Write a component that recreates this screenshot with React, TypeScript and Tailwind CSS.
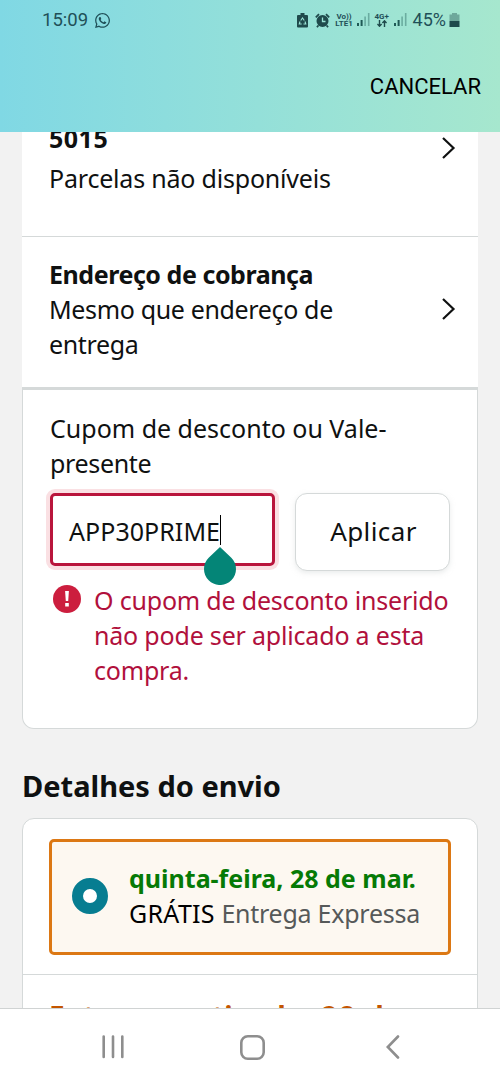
import { ReactNode } from "react"

import { FaWhatsapp } from "react-icons/fa"

function Chevron() {
  return (
    <svg className="h-6 w-4 shrink-0" viewBox="0 0 16 24" fill="none" stroke="#0f1111" strokeWidth="2.2">
      <path d="M2 2 L12.5 12 L2 22" />
    </svg>
  )
}

function Signal() {
  return (
    <svg className="h-[14px] w-[13px]" viewBox="0 0 13 14" fill="#1f5a56">
      <rect x="0" y="10" width="2" height="3" />
      <rect x="3.6" y="7" width="2" height="6" />
      <rect x="7.3" y="3.5" width="1.6" height="9.5" opacity="0.4" />
      <rect x="10.9" y="0" width="1.6" height="13" opacity="0.4" />
    </svg>
  )
}

function StatusBar() {
  return (
    <div className="flex h-10 items-center pl-[42px] pr-[40px] text-[#1f5058]">
      <span className="text-[18.5px] leading-none">15:09</span>
      <FaWhatsapp className="ml-1.5 size-[17px]" />
      <svg className="ml-auto h-[15px] w-[11px]" viewBox="0 0 11 15">
        <path d="M3.5 0h4v2H10a1 1 0 0 1 1 1v10.5a1 1 0 0 1-1 1H1a1 1 0 0 1-1-1V3a1 1 0 0 1 1-1h2.5z" fill="#1f4a4c" />
        <path d="M3.7 7.5 5.5 5l1.8 2.5M8 8.5l.8 2.5H6.5M4.7 11H2.3L3 8.5" fill="none" stroke="#9be3d6" strokeWidth="1.1" />
      </svg>
      <svg className="ml-[7px] h-[15px] w-[15px]" viewBox="0 0 15 15">
        <circle cx="7.5" cy="8" r="6" fill="#1f4a4c" />
        <path d="M.8 4.3 4 1.2M14.2 4.3 11 1.2M3.3 12.5 2 14.3M11.7 12.5 13 14.3" stroke="#1f4a4c" strokeWidth="1.8" />
        <path d="M7.5 4.5V8.5H10.5" fill="none" stroke="#9be3d6" strokeWidth="1.3" />
      </svg>
      <div className="ml-[5px] flex w-[19px] flex-col text-center text-[8px] font-bold leading-[7px]">
        <span>Vo))</span>
        <span>LTE1</span>
      </div>
      <div className="ml-[3px]"><Signal /></div>
      <div className="ml-[4px] flex w-[16px] flex-col items-center text-[8px] font-bold leading-[7px]">
        <span>4G+</span>
        <svg className="h-[7px] w-[10px]" viewBox="0 0 10 7" fill="none" stroke="#1f4a4c" strokeWidth="1.4">
          <path d="M2.5 0V6M.4 4 2.5 6.2 4.6 4M7.5 7V1M5.4 3 7.5.8 9.6 3" />
        </svg>
      </div>
      <div className="ml-[4px]"><Signal /></div>
      <span className="ml-[6px] text-[18px] leading-none">45%</span>
      <svg className="ml-[3px] h-[14px] w-[11px]" viewBox="0 0 11 14" fill="#1f4a4c">
        <path d="M3 0h5v1.5h2.5V8H.5V1.5H3z" opacity="0.4" />
        <rect x="0.5" y="8" width="10" height="6" />
      </svg>
    </div>
  )
}

function Row({ children }: { children: ReactNode }) {
  return (
    <div className="mx-[22px] flex border-b border-[#d5d9d9] bg-white pl-[26px] pr-[21px]">
      {children}
    </div>
  )
}

function BottomNav() {
  return (
    <nav className="flex h-[75px] shrink-0 items-center border-t border-[#d0d3d3] bg-white pb-px pl-[102px] pt-[3px]">
      <svg className="h-6 w-[22px]" viewBox="0 0 22 24" stroke="#8e8e8e" strokeWidth="2.6" strokeLinecap="round">
        <path d="M1.7 1.5V22M11 1.5V22M20.3 1.5V22" />
      </svg>
      <svg className="ml-[116px] size-[25px]" viewBox="0 0 25 25" fill="none" stroke="#8e8e8e" strokeWidth="2.6">
        <rect x="1.3" y="1.3" width="22.4" height="22.4" rx="6.5" />
      </svg>
      <svg className="ml-[121px] h-6 w-[14px]" viewBox="0 0 14 24" fill="none" stroke="#8e8e8e" strokeWidth="2.6" strokeLinecap="round">
        <path d="M12 1.5 1.8 12 12 22.5" />
      </svg>
    </nav>
  )
}

export default function App() {
  return (
    <div className="flex h-[1083px] w-[500px] flex-col overflow-hidden bg-[#f2f2f2] font-['Noto_Sans',sans-serif] text-[25px] leading-[35px] text-[#0f1111]">
      <header className="h-[132px] shrink-0 bg-linear-to-r from-[#80d8e4] to-[#a6e7ce] font-[Roboto,sans-serif]">
        <StatusBar />
        <div className="flex h-[92px] items-center justify-end pr-[19px] text-[22px] text-black">CANCELAR</div>
      </header>

      <main className="min-h-0 flex-1 overflow-hidden">
        <Row>
          <div className="h-[104px] flex-1 pl-px">
            <p className="-mt-[11px] font-bold tracking-[0.5px]">5015</p>
            <p className="mt-[5px] whitespace-nowrap tracking-[-0.2px]">Parcelas não disponíveis</p>
          </div>
          <div className="pt-[4px]"><Chevron /></div>
        </Row>
        <Row>
          <div className="h-[150px] flex-1 pl-px pt-5">
            <p className="whitespace-nowrap font-bold tracking-[-0.45px]">Endereço de cobrança</p>
            <p className="tracking-[-0.35px]">Mesmo que endereço de<br />entrega</p>
          </div>
          <div className="pt-[60px]"><Chevron /></div>
        </Row>

        <section className="mx-[22px] h-[341px] rounded-b-xl border border-t-2 border-[#d5d9d9] bg-white px-[27px] pt-[21px]">
          <p>Cupom de desconto ou Vale-<br /><span className="tracking-[-0.35px]">presente</span></p>
          <div className="mt-[12px] flex">
            <div className="relative flex h-[73px] w-[225px] items-center rounded-[5px] border-[3px] border-[#b9153c] pl-4 ring-4 ring-[#fae0e3]">
              <span className="pt-[3px] tracking-[0.05px]">APP30PRIME</span>
              <span className="h-[30px] w-px bg-black" />
              <svg className="absolute left-[151px] top-[51px] h-[38px] w-8" viewBox="0 0 32 38" fill="#048577">
                <path d="M16 0 27.3 10.7A16 16 0 1 1 4.7 10.7Z" />
              </svg>
            </div>
            <button className="ml-5 h-[78px] w-[155px] rounded-xl border border-[#d5d9d9] bg-white pb-px pl-0.5 text-[26px] tracking-[0.4px] shadow-[0_2px_5px_rgba(213,217,217,0.5)]">Aplicar</button>
          </div>
          <div className="mt-3 flex text-[#b1103c]">
            <svg className="ml-[3px] mt-[2px] size-[28px] shrink-0" viewBox="0 0 28 28">
              <circle cx="14" cy="14" r="14" fill="#cc1e3e" />
              <path d="M12.1 6h3.8l-.7 10h-2.4zM12.2 18h3.6v3.5h-3.6z" fill="#fff" />
            </svg>
            <p className="ml-[13px] whitespace-nowrap tracking-[-0.19px]">O cupom de desconto inserido<br />não pode ser aplicado a esta<br />compra.</p>
          </div>
        </section>

        <h2 className="ml-[22px] mt-[39px] text-[29px] font-bold leading-[36px]">Detalhes do envio</h2>

        <section className="mx-[22px] mt-[14px] h-[300px] rounded-t-xl border border-[#d5d9d9] bg-white">
          <div className="mx-[26px] mt-5 flex h-[116px] items-center rounded-[5px] border-[3px] border-[#dc7814] bg-[#fdf8f1] pb-[2px] pl-5">
            <div className="size-9 rounded-full border-[11px] border-[#077d91] bg-white" />
            <div className="ml-[21px] whitespace-nowrap">
              <p className="font-bold text-[#067a06]">quinta-feira, 28 de mar.</p>
              <p className="text-[#565959]"><span className="tracking-[0.3px] text-black">GRÁTIS</span> <span className="tracking-[-0.25px]">Entrega Expressa</span></p>
            </div>
          </div>
          <div className="mt-[19px] flex whitespace-nowrap border-t border-[#d5d9d9] pl-[26px] pt-6 text-[28px] font-bold text-[#c45500]">
            <span className="w-[116px]">Entrega</span>
            <span className="w-[103px]">partir</span>
            <span className="w-[53px]">de</span>
            <span className="w-[45px] tracking-[2px]">28</span>
            <span>de</span>
          </div>
        </section>
      </main>

      <BottomNav />
    </div>
  )
}
